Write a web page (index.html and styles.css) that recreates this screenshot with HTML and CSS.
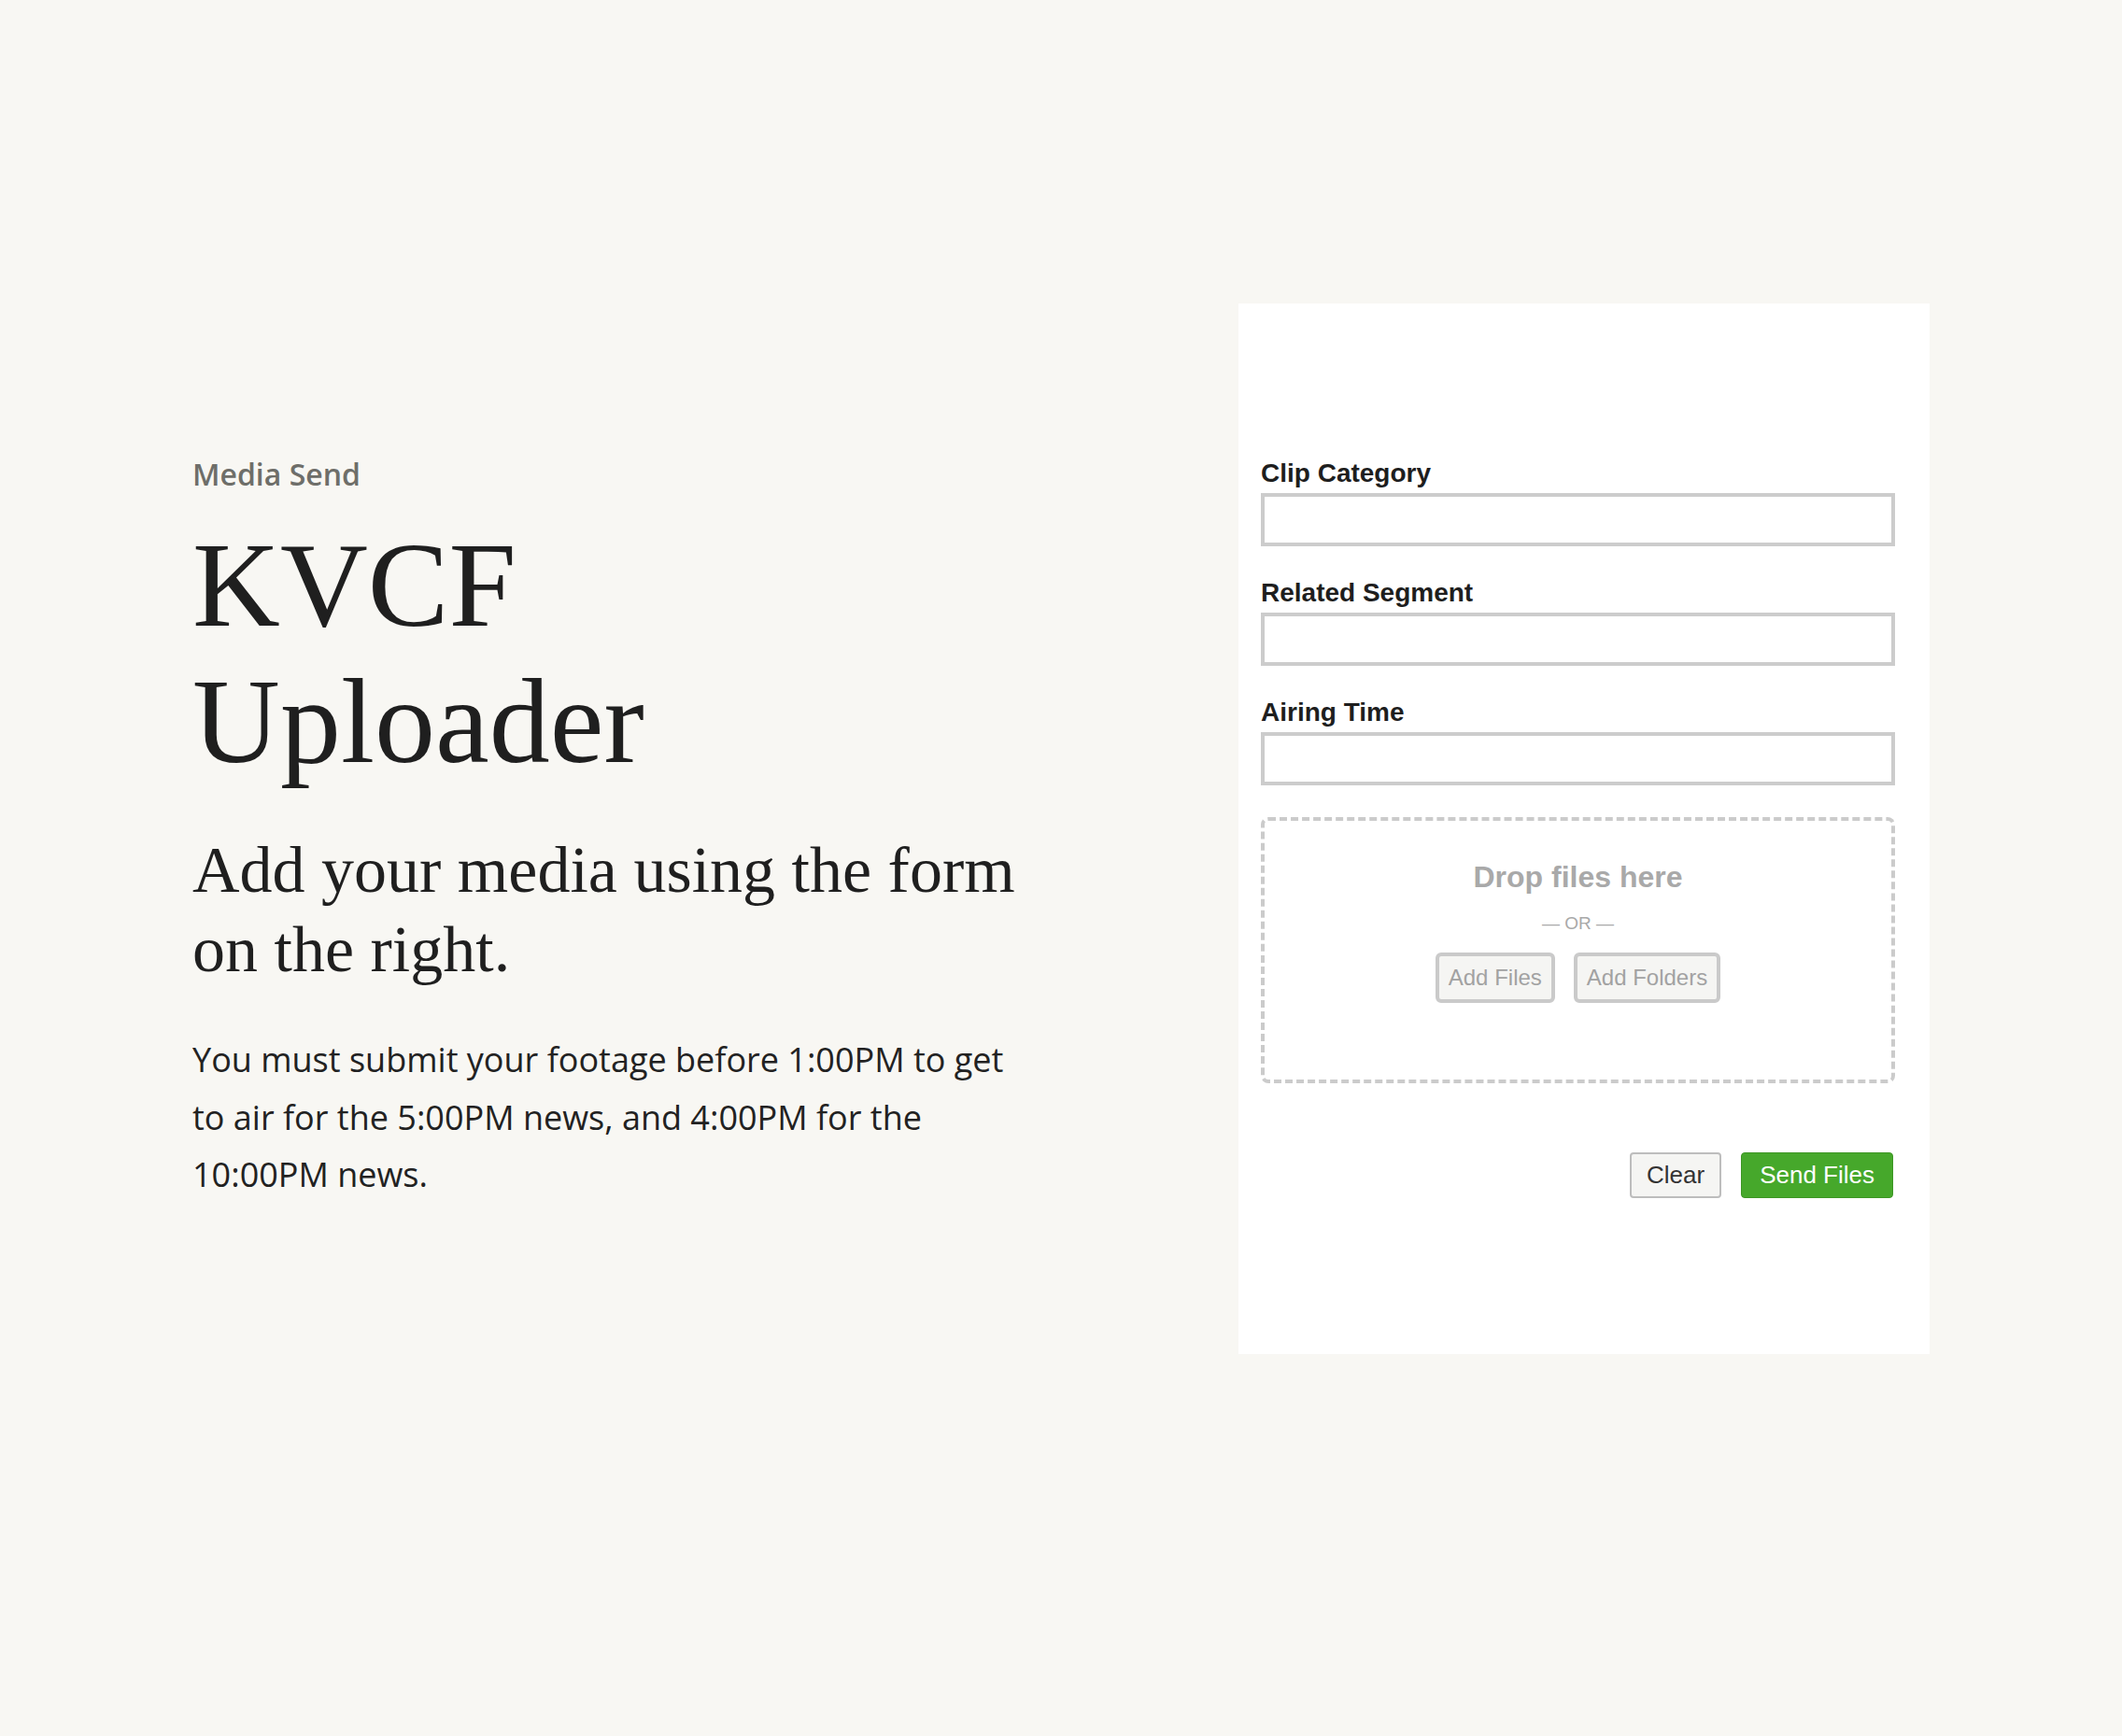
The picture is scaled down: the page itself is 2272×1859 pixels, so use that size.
FILE: index.html
```html
<!DOCTYPE html>
<html lang="en">
<head>
<meta charset="utf-8">
<title>KVCF Uploader</title>
<link rel="stylesheet" href="styles.css">
</head>
<body>
<main class="page">
  <section class="intro">
    <div class="eyebrow">Media Send</div>
    <h1 class="title">KVCF<br>Uploader</h1>
    <h2 class="subtitle">Add your media using the form on the right.</h2>
    <p class="note">You must submit your footage before 1:00PM to get to air for the 5:00PM news, and 4:00PM for the 10:00PM news.</p>
  </section>
  <section class="card">
    <form class="form">
      <div class="field">
        <label class="label" for="cat">Clip Category</label>
        <input class="input" id="cat" type="text">
      </div>
      <div class="field">
        <label class="label" for="seg">Related Segment</label>
        <input class="input" id="seg" type="text">
      </div>
      <div class="field">
        <label class="label" for="air">Airing Time</label>
        <input class="input" id="air" type="text">
      </div>
      <div class="dropzone">
        <div class="drop-title">Drop files here</div>
        <div class="drop-or">— OR —</div>
        <div class="drop-buttons">
          <button type="button" class="btn-ghost">Add Files</button>
          <button type="button" class="btn-ghost">Add Folders</button>
        </div>
      </div>
      <div class="actions">
        <button type="button" class="btn-clear">Clear</button>
        <button type="button" class="btn-send">Send Files</button>
      </div>
    </form>
  </section>
</main>
</body>
</html>
```
FILE: styles.css
```css
html, body {
  margin: 0;
  padding: 0;
  background: #f8f7f3;
}

.page {
  display: flex;
  justify-content: space-between;
  align-items: center;
  padding: 325px 206px 0 206px;
  box-sizing: border-box;
  width: 2272px;
}

.intro {
  width: 890px;
  flex: none;
}

.eyebrow {
  font-family: "Open Sans", sans-serif;
  font-weight: 600;
  font-size: 32px;
  line-height: 44px;
  color: #6e6e69;
}

.title {
  margin: 23px 0 0 0;
  font-family: "Liberation Serif", serif;
  font-weight: 400;
  font-size: 130px;
  line-height: 146px;
  color: #1f1f1f;
}

.subtitle {
  margin: 44px 0 0 0;
  font-family: "Liberation Serif", serif;
  font-weight: 400;
  font-size: 70px;
  line-height: 85px;
  color: #1f1f1f;
}

.note {
  margin: 45px 0 0 0;
  font-family: "Open Sans", sans-serif;
  font-size: 36px;
  line-height: 61.5px;
  color: #222222;
}

.card {
  width: 740px;
  flex: none;
  box-sizing: border-box;
  background: #ffffff;
  padding: 166px 37px 167px 24px;
}

.form {
  margin: 0;
}

.label {
  display: block;
  font-family: "Liberation Sans", Arial, sans-serif;
  font-weight: 700;
  font-size: 28px;
  line-height: 32px;
  color: #1e1e1e;
  margin-bottom: 5px;
}

.input {
  display: block;
  width: 100%;
  height: 57px;
  box-sizing: border-box;
  margin: 0 0 34px 0;
  border: 4px solid #cccccc;
  border-radius: 0;
  background: #ffffff;
  font-family: "Liberation Sans", Arial, sans-serif;
  font-size: 26px;
  outline: none;
}

.dropzone {
  height: 285px;
  box-sizing: border-box;
  border: 4px dashed #cbcbcb;
  border-radius: 8px;
  padding-top: 40px;
  text-align: center;
}

.drop-title {
  font-family: "Liberation Sans", Arial, sans-serif;
  font-weight: 700;
  font-size: 32px;
  line-height: 40px;
  color: #a9a9a9;
}

.drop-or {
  margin-top: 18px;
  font-family: "Liberation Sans", Arial, sans-serif;
  font-size: 19px;
  line-height: 24px;
  color: #a9a9a9;
}

.drop-buttons {
  margin-top: 19px;
  display: flex;
  justify-content: center;
  gap: 20px;
}

.btn-ghost {
  height: 54px;
  padding: 0 10px;
  border: 4px solid #cacaca;
  border-radius: 6px;
  background: #f5f5f3;
  color: #a2a2a2;
  font-family: "Liberation Sans", Arial, sans-serif;
  font-size: 24px;
  cursor: pointer;
}

.actions {
  margin-top: 74px;
  display: flex;
  justify-content: flex-end;
  gap: 21px;
  padding-right: 2px;
}

.btn-clear {
  height: 49px;
  padding: 0 16px;
  border: 2px solid #bdbdbd;
  border-radius: 4px;
  background: #f5f5f3;
  color: #333333;
  font-family: "Liberation Sans", Arial, sans-serif;
  font-size: 26px;
  cursor: pointer;
}

.btn-send {
  height: 49px;
  padding: 0 19px;
  border: 1px solid #3d9624;
  border-radius: 4px;
  background: #46a82b;
  color: #ffffff;
  font-family: "Liberation Sans", Arial, sans-serif;
  font-size: 26px;
  cursor: pointer;
}
```
